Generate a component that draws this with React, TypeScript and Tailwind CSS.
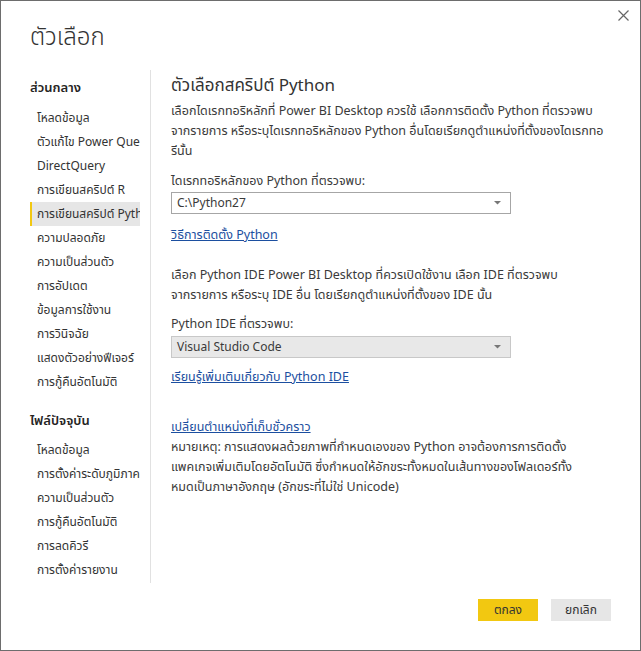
import React from 'react';

const globalItems = [
  'โหลดข้อมูล',
  'ตัวแก้ไข Power Query',
  'DirectQuery',
  'การเขียนสคริปต์ R',
  'การเขียนสคริปต์ Python',
  'ความปลอดภัย',
  'ความเป็นส่วนตัว',
  'การอัปเดต',
  'ข้อมูลการใช้งาน',
  'การวินิจฉัย',
  'แสดงตัวอย่างฟีเจอร์',
  'การกู้คืนอัตโนมัติ',
];

const fileItems = [
  'โหลดข้อมูล',
  'การตั้งค่าระดับภูมิภาค',
  'ความเป็นส่วนตัว',
  'การกู้คืนอัตโนมัติ',
  'การลดคิวรี',
  'การตั้งค่ารายงาน',
];

const SELECTED = 'การเขียนสคริปต์ Python';

const font = { fontFamily: '"Segoe UI", "Noto Sans Thai", "Noto Sans", "DejaVu Sans", sans-serif' };

const NavItem: React.FC<{ label: string; active?: boolean }> = ({ label, active }) => (
  <div
    className={`h-[24px] w-[110px] overflow-hidden whitespace-nowrap text-[12px] leading-[24px] text-[#333] ${
      active ? 'border-l-2 border-[#f2c811] bg-[#e6e6e6] pl-[5px]' : 'pl-[7px]'
    }`}
  >
    {label}
  </div>
);

const Caret: React.FC = () => (
  <svg width="7" height="4" viewBox="0 0 7 4" className="fill-[#777]">
    <path d="M0 0h7L3.5 3.5z" />
  </svg>
);

// lines broken where the dialog breaks them
const Lines: React.FC<{ lines: string[] }> = ({ lines }) => (
  <div className="whitespace-nowrap">
    {lines.map((l) => (
      <div key={l}>{l}</div>
    ))}
  </div>
);

const App: React.FC = () => {
  return (
    <div
      className="relative flex h-[651px] w-[641px] flex-col border border-[#6d6d6d] bg-white text-[#333]"
      style={font}
    >
      {/* close */}
      <button className="absolute right-[11px] top-[8px] flex h-[12px] w-[12px] items-center justify-center">
        <svg width="11" height="11" viewBox="0 0 11 11" className="stroke-[#666]" strokeWidth="1.2">
          <path d="M0.5 0.5l10 10M10.5 0.5l-10 10" />
        </svg>
      </button>

      <h1 className="mt-[21px] pl-[29px] text-[24px] font-light leading-[32px] text-[#333]">ตัวเลือก</h1>

      <div className="mt-[16px] flex h-[513px]">
        {/* nav */}
        <div className="ml-[29px] w-[121px] border-r border-[#e1e1e1] pt-[8px]">
          <div className="mb-[8px] h-[20px] text-[13px] font-semibold leading-[20px] text-[#252423]">ส่วนกลาง</div>
          {globalItems.map((item) => (
            <NavItem key={item} label={item} active={item === SELECTED} />
          ))}
          <div className="mb-[7px] mt-[17px] h-[20px] text-[13px] font-semibold leading-[20px] text-[#252423]">
            ไฟล์ปัจจุบัน
          </div>
          {fileItems.map((item) => (
            <NavItem key={item} label={item} />
          ))}
        </div>

        {/* content */}
        <div className="flex-1 pl-[20px] pt-[4px] text-[12.5px] leading-[20px] text-[#3a3a3a]">
          <h2 className="h-[24px] text-[17px] font-normal leading-[24px] text-[#333]">ตัวเลือกสคริปต์ Python</h2>
          <div className="mt-[4px]">
            <Lines
              lines={[
                'เลือกไดเรกทอริหลักที่ Power BI Desktop ควรใช้ เลือกการติดตั้ง Python ที่ตรวจพบ',
                'จากรายการ หรือระบุไดเรกทอริหลักของ Python อื่นโดยเรียกดูตำแหน่งที่ตั้งของไดเรกทอ',
                'รีนั้น',
              ]}
            />
          </div>

          <div className="mt-[10px]">ไดเรกทอริหลักของ Python ที่ตรวจพบ:</div>
          <div className="flex h-[22px] w-[340px] items-center justify-between border border-[#a6a6a6] bg-white pl-[5px] pr-[9px] text-[12px]">
            <span>C:\Python27</span>
            <Caret />
          </div>

          <a className="mt-[12px] block w-fit text-[#1c4fa0] underline">วิธีการติดตั้ง Python</a>

          <div className="mt-[20px]">
            <Lines
              lines={[
                'เลือก Python IDE Power BI Desktop ที่ควรเปิดใช้งาน เลือก IDE ที่ตรวจพบ',
                'จากรายการ หรือระบุ IDE อื่น โดยเรียกดูตำแหน่งที่ตั้งของ IDE นั้น',
              ]}
            />
          </div>

          <div className="mt-[9px]">Python IDE ที่ตรวจพบ:</div>
          <div className="mt-[1px] flex h-[22px] w-[340px] items-center justify-between border border-[#c8c8c8] bg-[#e8e8e8] pl-[5px] pr-[9px] text-[12px]">
            <span>Visual Studio Code</span>
            <Caret />
          </div>

          <a className="mt-[10px] block w-fit text-[#1c4fa0] underline">เรียนรู้เพิ่มเติมเกี่ยวกับ Python IDE</a>

          <a className="mt-[30px] block w-fit text-[#1c4fa0] underline">เปลี่ยนตำแหน่งที่เก็บชั่วคราว</a>
          <Lines
            lines={[
              'หมายเหตุ: การแสดงผลด้วยภาพที่กำหนดเองของ Python อาจต้องการการติดตั้ง',
              'แพคเกจเพิ่มเติมโดยอัตโนมัติ ซึ่งกำหนดให้อักขระทั้งหมดในเส้นทางของโฟลเดอร์ทั้ง',
              'หมดเป็นภาษาอังกฤษ (อักขระที่ไม่ใช่ Unicode)',
            ]}
          />
        </div>
      </div>

      {/* footer */}
      <div className="mt-[16px] flex justify-end gap-[13px] pr-[29px]">
        <button className="h-[22px] w-[60px] bg-[#f2c811] text-[12px] text-[#333]">ตกลง</button>
        <button className="h-[22px] w-[60px] bg-[#e6e6e6] text-[12px] text-[#333]">ยกเลิก</button>
      </div>
    </div>
  );
};

export default App;
